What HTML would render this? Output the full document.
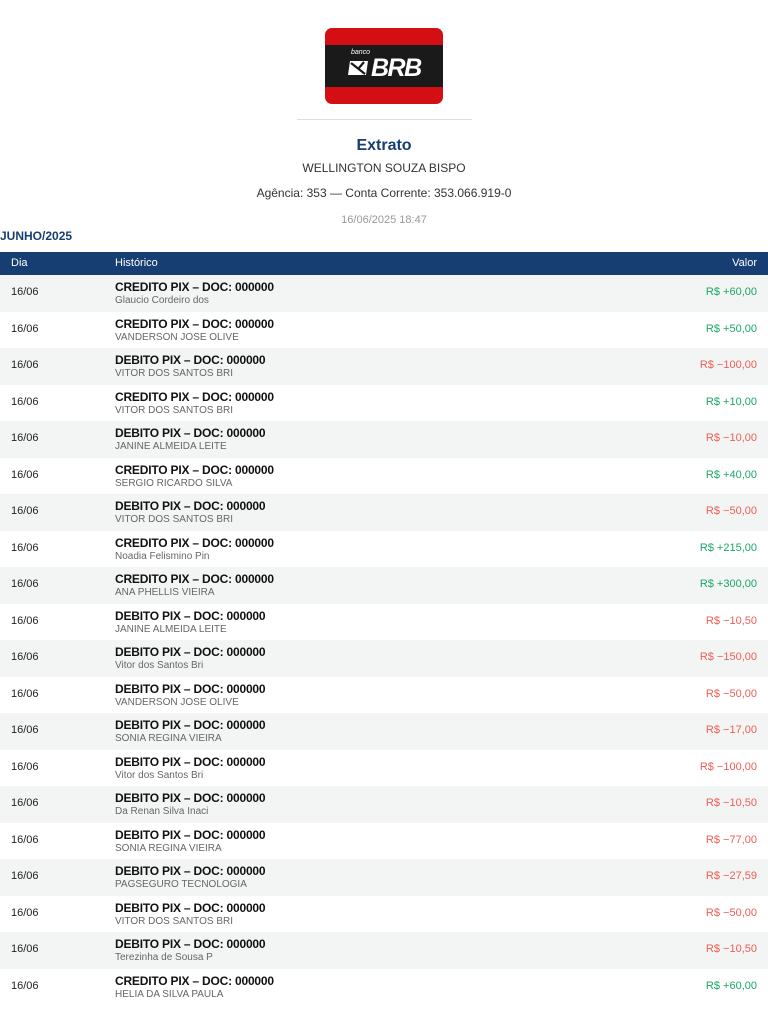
<!DOCTYPE html>
<html><head><meta charset="utf-8"><style>
*{margin:0;padding:0;box-sizing:border-box}
body{width:768px;height:1024px;overflow:hidden;background:#fff;font-family:"Liberation Sans",Arial,sans-serif;position:relative}
.logo{position:absolute;left:325px;top:28px;width:118px;height:76px;background:#d40f14;border-radius:7px;overflow:hidden}
.band{position:absolute;left:0;top:17px;width:118px;height:42px;background:#1a1a1a}
.banco{position:absolute;left:26px;top:4px;color:#fff;font-size:7px;font-style:italic}
.brb{position:absolute;left:46px;top:10px;color:#fff;font-size:25px;font-weight:bold;font-style:italic;letter-spacing:-1.5px;line-height:26px}
.hr{position:absolute;left:297px;top:119px;width:175px;height:1px;background:#ddd}
.c{position:absolute;left:0;width:768px;text-align:center}
.t1{top:137px;font-size:16px;font-weight:bold;color:#163e72}
.t2{top:161px;font-size:12px;color:#333}
.t3{top:186px;font-size:12px;color:#333}
.t4{top:214px;font-size:11px;color:#999}
.mon{position:absolute;left:0;top:229px;font-size:12px;font-weight:bold;color:#163e72}
.th{position:absolute;left:0;top:252px;width:768px;height:23px;background:#163e72;color:#fff;font-size:11px}
.th span{position:absolute;top:5px}
.row{position:absolute;left:0;width:768px;height:36.5px;font-size:11px}
.row:nth-child(odd){background:#f3f4f4}
.d{position:absolute;left:11px;top:11px;color:#222}
.h{position:absolute;left:115px;top:5px;font-weight:bold;font-size:12px;color:#111;letter-spacing:-0.2px}
.n{position:absolute;left:115px;top:20px;font-size:10px;color:#666}
.v{position:absolute;right:11px;top:11px}
.g{color:#1aa866}.r{color:#ec5e55}
</style></head><body>
<div class="logo"><div class="band"><div class="banco">banco</div>
<svg style="position:absolute;left:22px;top:14px" width="24" height="18" viewBox="0 0 24 18"><path d="M3 2 L21 2 L19 16 L1 16 Z" fill="#fff"/><path d="M4 4 L18 15 M17 3 L12 9" stroke="#1a1a1a" stroke-width="2.2" fill="none"/></svg>
<div class="brb">BRB</div></div></div>
<div class="hr"></div>
<div class="c t1">Extrato</div>
<div class="c t2">WELLINGTON SOUZA BISPO</div>
<div class="c t3">Agência: 353 — Conta Corrente: 353.066.919-0</div>
<div class="c t4">16/06/2025 18:47</div>
<div class="mon">JUNHO/2025</div>
<div class="th"><span style="left:11px">Dia</span><span style="left:115px">Histórico</span><span style="right:11px">Valor</span></div>
<div id="rows" style="position:absolute;left:0;top:275px;width:768px">
</div>
<script>
const d=[["CREDITO","Glaucio Cordeiro dos","+60,00"],["CREDITO","VANDERSON JOSE OLIVE","+50,00"],["DEBITO","VITOR DOS SANTOS BRI","−100,00"],["CREDITO","VITOR DOS SANTOS BRI","+10,00"],["DEBITO","JANINE ALMEIDA LEITE","−10,00"],["CREDITO","SERGIO RICARDO SILVA","+40,00"],["DEBITO","VITOR DOS SANTOS BRI","−50,00"],["CREDITO","Noadia Felismino Pin","+215,00"],["CREDITO","ANA PHELLIS VIEIRA","+300,00"],["DEBITO","JANINE ALMEIDA LEITE","−10,50"],["DEBITO","Vitor dos Santos Bri","−150,00"],["DEBITO","VANDERSON JOSE OLIVE","−50,00"],["DEBITO","SONIA REGINA VIEIRA","−17,00"],["DEBITO","Vitor dos Santos Bri","−100,00"],["DEBITO","Da Renan Silva Inaci","−10,50"],["DEBITO","SONIA REGINA VIEIRA","−77,00"],["DEBITO","PAGSEGURO TECNOLOGIA","−27,59"],["DEBITO","VITOR DOS SANTOS BRI","−50,00"],["DEBITO","Terezinha de Sousa P","−10,50"],["CREDITO","HELIA DA SILVA PAULA","+60,00"]];
let h="";d.forEach((x,i)=>{h+=`<div class="row" style="top:${i*36.5}px"><span class="d">16/06</span><span class="h">${x[0]} PIX – DOC: 000000</span><span class="n">${x[1]}</span><span class="v ${x[0]=="CREDITO"?"g":"r"}">R$ ${x[2]}</span></div>`});
document.getElementById("rows").innerHTML=h;
</script>
</body></html>
